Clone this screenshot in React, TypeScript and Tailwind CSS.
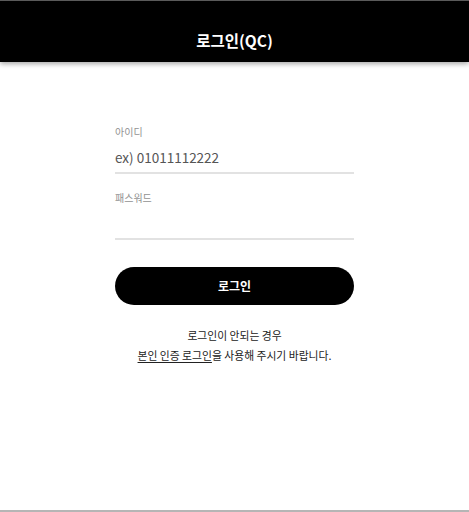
export default function App() {
  return (
    <div className="flex h-[512px] flex-col bg-white font-['Noto_Sans_CJK_KR','Noto_Sans',sans-serif]">
      {/* Header */}
      <header className="flex h-[62px] shrink-0 justify-center border-t border-[#5a5a5a] bg-black pt-[17px] shadow-[0_2px_5px_rgba(0,0,0,0.35)]">
        <h1 className="h-[44px] text-[15.5px] leading-[44px] font-bold text-white">로그인(QC)</h1>
      </header>

      {/* Login form */}
      <main className="mx-auto mt-[63px] w-[239px]">
        <div className="flex flex-col">
          <label className="h-[14px] text-[10px] leading-[14px] text-[#929292]">아이디</label>
          <input
            className="mt-[8px] h-[20px] w-full bg-transparent text-[13.5px] leading-[20px] text-[#555] outline-none placeholder:text-[#555]"
            placeholder="ex) 01011112222"
          />
          <div className="mt-[5px] h-[2px] bg-[#e2e2e2]" />
        </div>

        <div className="mt-[17px] flex flex-col">
          <label className="h-[14px] text-[10px] leading-[14px] text-[#929292]">패스워드</label>
          <input type="password" className="mt-[8px] h-[20px] w-full bg-transparent text-[13px] text-[#555] outline-none" />
          <div className="mt-[5px] h-[2px] bg-[#e2e2e2]" />
        </div>

        <button className="mt-[27px] h-[38px] w-full rounded-full bg-black text-[12px] font-bold text-white">로그인</button>

        <div className="mt-[20px] text-center text-[10.8px] leading-[20px] text-[#222]">
          <p>로그인이 안되는 경우</p>
          <p className="whitespace-nowrap">
            <span className="underline underline-offset-2">본인 인증 로그인</span>을 사용해 주시기 바랍니다.
          </p>
        </div>
      </main>

      <div className="flex-1" />
      <div className="h-[2px] shrink-0 bg-[#b5b5b5]" />
    </div>
  );
}
